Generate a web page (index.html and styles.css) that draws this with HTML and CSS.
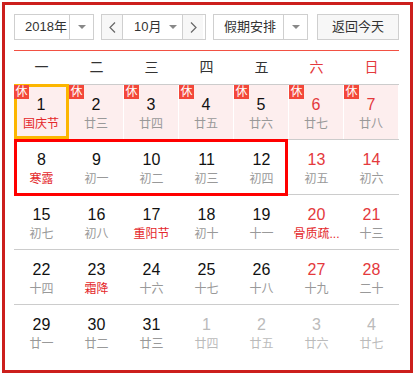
FILE: index.html
```html
<!DOCTYPE html>
<html lang="zh-CN">
<head>
<meta charset="utf-8">
<title>万年历</title>
<link rel="stylesheet" href="styles.css">
</head>
<body>
<div class="cal">
  <div class="toolbar">
    <div class="select year">
      <span class="sel-text">2018年</span>
      <span class="sel-arrow"><i class="tri"></i></span>
    </div>
    <div class="month-group">
      <span class="nav nav-prev"><svg width="7" height="11" viewBox="0 0 7 11"><polyline points="6,0.5 1,5.5 6,10.5" fill="none" stroke="#666" stroke-width="1.2"/></svg></span>
      <span class="month-sel"><span class="month-text">10月</span><i class="tri"></i></span>
      <span class="nav nav-next"><svg width="7" height="11" viewBox="0 0 7 11"><polyline points="1,0.5 6,5.5 1,10.5" fill="none" stroke="#666" stroke-width="1.2"/></svg></span>
    </div>
    <div class="select holiday">
      <span class="sel-text">假期安排</span>
      <span class="sel-arrow"><i class="tri"></i></span>
    </div>
    <div class="today-btn">返回今天</div>
  </div>
  <div class="rule"></div>
  <div class="week-head">
    <span>一</span><span>二</span><span>三</span><span>四</span><span>五</span><span class="we">六</span><span class="we">日</span>
  </div>
  <div class="grid">
    <div class="row">
      <div class="cell hol today"><i class="rest">休</i><b class="num">1</b><span class="lunar fest">国庆节</span></div>
      <div class="cell hol"><i class="rest">休</i><b class="num">2</b><span class="lunar">廿三</span></div>
      <div class="cell hol"><i class="rest">休</i><b class="num">3</b><span class="lunar">廿四</span></div>
      <div class="cell hol"><i class="rest">休</i><b class="num">4</b><span class="lunar">廿五</span></div>
      <div class="cell hol"><i class="rest">休</i><b class="num">5</b><span class="lunar">廿六</span></div>
      <div class="cell hol wk"><i class="rest">休</i><b class="num">6</b><span class="lunar">廿七</span></div>
      <div class="cell hol wk"><i class="rest">休</i><b class="num">7</b><span class="lunar">廿八</span></div>
    </div>
    <div class="row">
      <div class="cell"><b class="num">8</b><span class="lunar fest">寒露</span></div>
      <div class="cell"><b class="num">9</b><span class="lunar">初一</span></div>
      <div class="cell"><b class="num">10</b><span class="lunar">初二</span></div>
      <div class="cell"><b class="num">11</b><span class="lunar">初三</span></div>
      <div class="cell"><b class="num">12</b><span class="lunar">初四</span></div>
      <div class="cell wk"><b class="num">13</b><span class="lunar">初五</span></div>
      <div class="cell wk"><b class="num">14</b><span class="lunar">初六</span></div>
    </div>
    <div class="row">
      <div class="cell"><b class="num">15</b><span class="lunar">初七</span></div>
      <div class="cell"><b class="num">16</b><span class="lunar">初八</span></div>
      <div class="cell"><b class="num">17</b><span class="lunar fest">重阳节</span></div>
      <div class="cell"><b class="num">18</b><span class="lunar">初十</span></div>
      <div class="cell"><b class="num">19</b><span class="lunar">十一</span></div>
      <div class="cell wk"><b class="num">20</b><span class="lunar fest">骨质疏...</span></div>
      <div class="cell wk"><b class="num">21</b><span class="lunar">十三</span></div>
    </div>
    <div class="row">
      <div class="cell"><b class="num">22</b><span class="lunar">十四</span></div>
      <div class="cell"><b class="num">23</b><span class="lunar fest">霜降</span></div>
      <div class="cell"><b class="num">24</b><span class="lunar">十六</span></div>
      <div class="cell"><b class="num">25</b><span class="lunar">十七</span></div>
      <div class="cell"><b class="num">26</b><span class="lunar">十八</span></div>
      <div class="cell wk"><b class="num">27</b><span class="lunar">十九</span></div>
      <div class="cell wk"><b class="num">28</b><span class="lunar">二十</span></div>
    </div>
    <div class="row">
      <div class="cell"><b class="num">29</b><span class="lunar">廿一</span></div>
      <div class="cell"><b class="num">30</b><span class="lunar">廿二</span></div>
      <div class="cell"><b class="num">31</b><span class="lunar">廿三</span></div>
      <div class="cell other"><b class="num">1</b><span class="lunar">廿四</span></div>
      <div class="cell other"><b class="num">2</b><span class="lunar">廿五</span></div>
      <div class="cell other"><b class="num">3</b><span class="lunar">廿六</span></div>
      <div class="cell other"><b class="num">4</b><span class="lunar">廿七</span></div>
    </div>
    <div class="selection"></div>
  </div>
</div>
</body>
</html>
```

FILE: styles.css
```css
*, *::before, *::after { box-sizing: border-box; }
html, body { margin: 0; padding: 0; background: #fff; }
body {
  font-family: "Liberation Sans", "Noto Sans CJK SC", sans-serif;
  color: #333;
}
.cal {
  margin: 2px;
  width: 411px;
  height: 371px;
  border: 3px solid #cc1f1c;
  padding: 9px 0 0 9px;
}
.toolbar {
  display: flex;
  width: 385px;
  height: 26px;
  font-size: 13px;
}
.select, .month-group, .today-btn {
  display: flex;
  height: 26px;
  border: 1px solid #cfcfcf;
  background: #fff;
}
.year { width: 80px; margin-right: 7px; }
.year .sel-text { width: 54px; padding-left: 10px; }
.holiday { width: 95px; margin-right: 9px; }
.holiday .sel-text { width: 69px; padding-left: 10px; }
.sel-text { line-height: 24px; white-space: nowrap; }
.sel-arrow {
  width: 24px;
  border-left: 1px solid #cfcfcf;
  display: flex;
  align-items: center;
  justify-content: center;
}
.tri {
  display: block;
  width: 0;
  height: 0;
  border-left: 4px solid transparent;
  border-right: 4px solid transparent;
  border-top: 4px solid #888;
}
.month-group { width: 105px; margin-right: 7px; }
.nav {
  width: 21px;
  background: #f7f7f7;
  display: flex;
  align-items: center;
  justify-content: center;
}
.nav-prev { border-right: 1px solid #cfcfcf; }
.nav-next { border-left: 1px solid #cfcfcf; }
.month-sel {
  width: 59px;
  display: flex;
  align-items: center;
  padding-left: 11px;
}
.month-text { line-height: 24px; margin-right: 8px; }
.today-btn {
  width: 82px;
  background: #f7f7f7;
  justify-content: center;
  line-height: 24px;
}
.rule {
  width: 385px;
  height: 1px;
  margin-top: 10px;
  background: #f25143;
}
.week-head {
  display: grid;
  grid-template-columns: repeat(7, 55px);
  height: 33px;
  line-height: 33px;
  font-size: 14px;
  text-align: center;
  color: #333;
}
.week-head .we { color: #e4393c; }
.grid {
  position: relative;
  width: 385px;
}
.row {
  display: grid;
  grid-template-columns: repeat(7, 55px);
  height: 55px;
  border-top: 1px solid #cccccc;
}
.cell {
  position: relative;
  display: flex;
  flex-direction: column;
  align-items: center;
  padding-top: 11px;
}
.num {
  font-weight: normal;
  font-size: 16px;
  line-height: 18px;
  color: #111;
}
.lunar {
  font-size: 12px;
  line-height: 16px;
  margin-top: 2px;
  color: #999;
  white-space: nowrap;
}
.lunar.fest { color: #e4282b; }
.wk .num { color: #e4393c; }
.other .num, .other .lunar { color: #bbb; }
.hol {
  background: #fdeeee;
  border-right: 1px solid #fff;
}
.rest {
  position: absolute;
  top: 0;
  left: 0;
  z-index: 2;
  width: 15px;
  height: 14px;
  background: #f3473a;
  color: #fff;
  font-style: normal;
  font-size: 12px;
  line-height: 14px;
  text-align: center;
}
.today::after {
  content: "";
  position: absolute;
  top: -1px;
  left: 0;
  width: 55px;
  height: 55px;
  border: 3px solid #fcb600;
  z-index: 1;
}
.selection {
  position: absolute;
  left: 0;
  top: 55px;
  width: 274px;
  height: 57px;
  border: 3px solid #f00;
  pointer-events: none;
}
```
